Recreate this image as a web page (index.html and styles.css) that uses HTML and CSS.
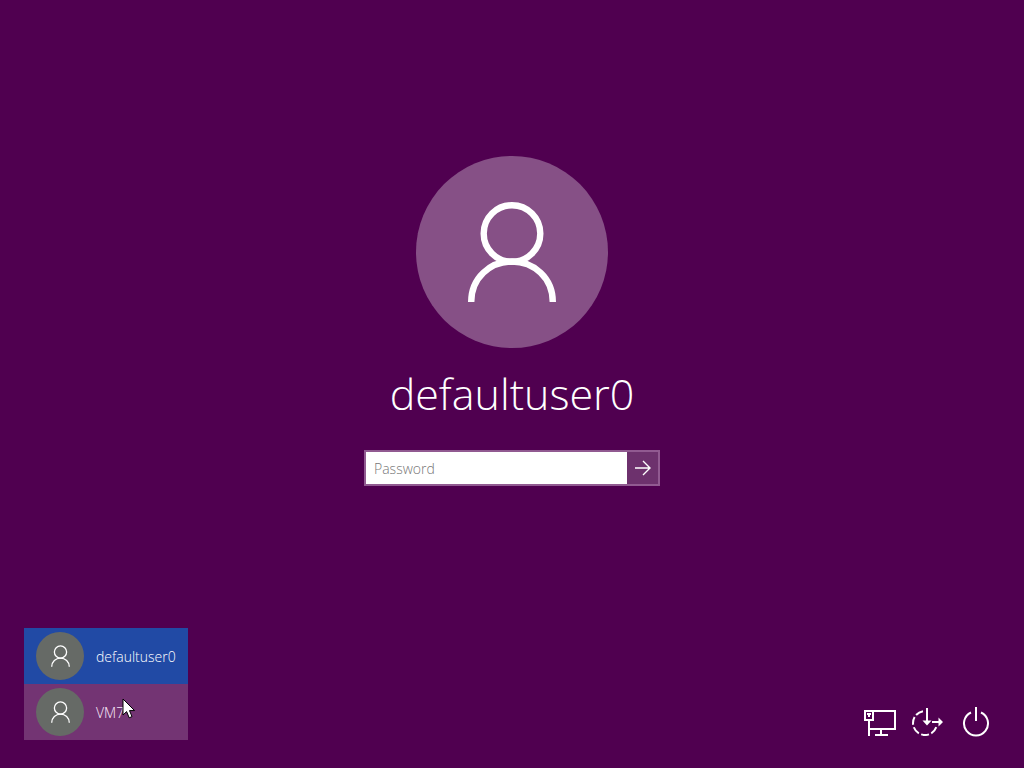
FILE: index.html
```html
<!DOCTYPE html>
<html lang="en">
<head>
<meta charset="utf-8">
<meta name="viewport" content="width=device-width, initial-scale=1">
<title>Sign in</title>
<link rel="stylesheet" href="styles.css">
</head>
<body>
<svg class="symbols" aria-hidden="true">
  <symbol id="person" viewBox="0 0 88 100">
    <circle cx="44" cy="31.500" r="28.300"/>
    <path d="M3.200 100C3.200 76 22 59.500 44 59.500S84.800 76 84.800 100"/>
  </symbol>
</svg>
<main class="signin">
  <div class="avatar"><svg class="avatar-icon" aria-hidden="true"><use href="#person"/></svg></div>
  <h1 class="user-name">defaultuser0</h1>
  <form class="password-form">
    <input class="password-input" type="password" placeholder="Password" aria-label="Password">
    <button class="submit" type="button" aria-label="Submit">
      <svg width="16" height="16" viewBox="0 0 16 16" aria-hidden="true"><path d="M0 8H15M8 1L15 8L8 15"/></svg>
    </button>
  </form>
</main>
<footer class="footer">
  <div class="users">
    <button class="user user-selected" type="button">
      <span class="user-avatar"><svg class="user-icon" aria-hidden="true"><use href="#person"/></svg></span>
      <span>defaultuser0</span>
    </button>
    <button class="user" type="button">
      <span class="user-avatar"><svg class="user-icon" aria-hidden="true"><use href="#person"/></svg></span>
      <span>VM7</span>
    </button>
    <svg class="cursor" width="14" height="21" viewBox="0 0 14 21" aria-hidden="true"><path d="M1 1V17L4.600 13.600L7.200 19.800L10 18.600L7.500 12.600H12.600Z"/></svg>
  </div>
  <nav class="tools" aria-label="System">
    <button class="tool" type="button" aria-label="Network">
      <svg width="32" height="28" viewBox="0 0 32 28" aria-hidden="true"><path d="M9 3H31V21H6M1 3H9V12H1ZM3 6H7M5 6V9M5 12V28M17 21V26M11 27H24"/></svg>
    </button>
    <button class="tool" type="button" aria-label="Ease of access">
      <svg width="32" height="28" viewBox="0 0 32 28" aria-hidden="true"><path class="dashes" d="M11 3.200A12 12 0 1 0 24.600 18.200"/><path d="M15 0V14M20 14H28"/><path class="solid" d="M10.500 12.500H19.500L15 17.500ZM26.500 9.500L31 14L26.500 18.500Z"/></svg>
    </button>
    <button class="tool" type="button" aria-label="Power">
      <svg width="28" height="30" viewBox="0 0 28 30" aria-hidden="true"><path d="M9 5.500A12 12 0 1 0 19 5.500M14 0V14"/></svg>
    </button>
  </nav>
</footer>
</body>
</html>
```
FILE: styles.css
```css
* { box-sizing: border-box; }
body {
  margin: 0;
  min-height: 100vh;
  display: flex;
  flex-direction: column;
  background: #500050;
  color: #fff;
  font-family: "Open Sans", "Noto Sans", sans-serif;
}
button { border: 0; padding: 0; color: inherit; font: inherit; }
svg { fill: none; stroke: #fff; }
.symbols { position: absolute; width: 0; height: 0; }
.signin {
  flex: 1;
  display: flex;
  flex-direction: column;
  align-items: center;
  justify-content: center;
  padding-top: 14px;
}
.avatar {
  display: grid;
  place-items: center;
  width: 192px;
  height: 192px;
  border-radius: 50%;
  background: #865086;
}
.avatar-icon { width: 88px; height: 100px; stroke-width: 6.400px; }
.user-name {
  margin: 16px 0 26px;
  font-size: 43px;
  line-height: 60px;
  font-weight: 300;
}
.password-form {
  display: flex;
  width: 296px;
  height: 36px;
  border: 2px solid #915a91;
}
.password-input {
  flex: 1;
  min-width: 0;
  border: 0;
  padding: 0 8px;
  background: #fff;
  color: #222;
  font: 300 14px "Open Sans", "Noto Sans", sans-serif;
}
.password-input::placeholder { color: #777; opacity: 1; }
.submit { display: grid; place-items: center; width: 31px; background: #6d316d; }
.submit svg { stroke-width: 1.400px; }
.footer {
  display: flex;
  justify-content: space-between;
  align-items: flex-end;
  padding: 0 32px 28px 24px;
}
.users { position: relative; }
.user {
  display: flex;
  align-items: center;
  gap: 12px;
  width: 100%;
  min-width: 164px;
  height: 56px;
  padding: 0 12px;
  background: #733473;
  color: #fbeafb;
  font-size: 14px;
  font-weight: 300;
}
.user-selected { background: #214aa5; color: #fff; }
.user-avatar {
  display: grid;
  place-items: center;
  width: 48px;
  height: 48px;
  border-radius: 50%;
  background: #666a66;
}
.user-icon { width: 19px; height: 22px; stroke-width: 6px; }
.cursor { position: absolute; left: 98px; top: 70px; fill: #fff; stroke: #000; }
.tools { display: flex; align-items: center; gap: 16px; height: 36px; }
.tool { display: grid; place-items: center; width: 32px; height: 36px; background: none; }
.tool svg { stroke-width: 2px; }
.dashes { stroke-dasharray: 8 2.500; }
.tool .solid { fill: #fff; stroke: none; }
```
